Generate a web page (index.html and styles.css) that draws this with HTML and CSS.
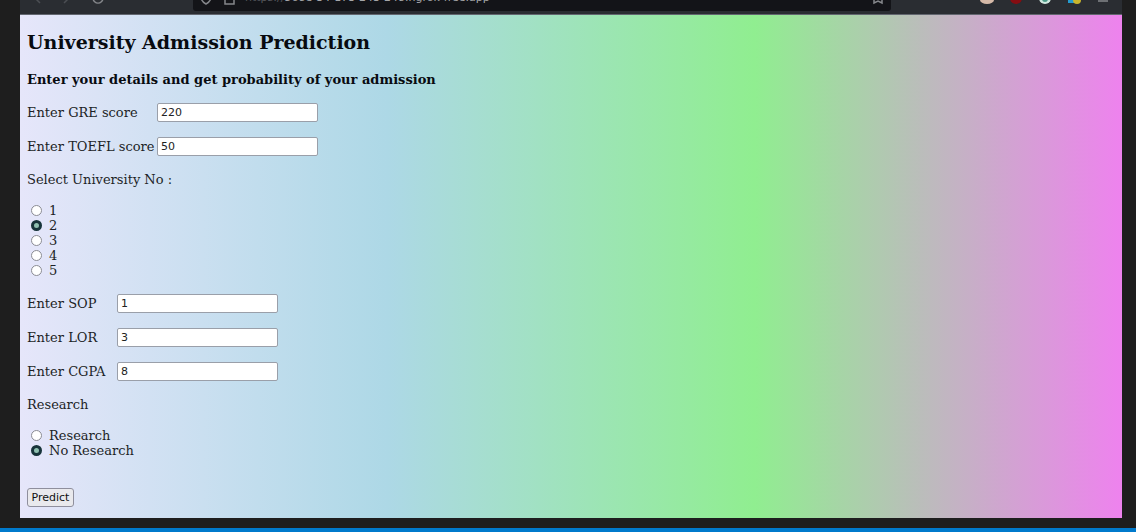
FILE: index.html
```html
<!DOCTYPE html>
<html lang="en">
<head>
<meta charset="utf-8">
<title>University Admission Prediction</title>
<link rel="stylesheet" href="styles.css">
</head>
<body>
<div class="window">
  <header class="toolbar">
    <div class="nav">
      <svg class="icon dim" viewBox="0 0 14 14"><path d="M10 2 5 7l5 5"/></svg>
      <svg class="icon dim" viewBox="0 0 14 14"><path d="M4 2l5 5-5 5"/></svg>
      <svg class="icon" viewBox="0 0 14 14"><path d="M12 4a5 5 0 1 1-8 0"/></svg>
    </div>
    <div class="address">
      <svg class="icon" viewBox="0 0 14 14"><path d="M7 1 12 3v4q-1 4-5 6-4-2-5-6V3z"/></svg>
      <svg class="icon" viewBox="0 0 14 14"><path d="M3 6h9v7H3zM5 6V3h5v3"/></svg>
      <span class="url"><span class="scheme">https://</span>568e-34-173-243-248.ngrok-free.app</span>
      <svg class="icon star" viewBox="0 0 14 14"><path d="M3 5v7l4-2 4 2V5"/></svg>
    </div>
    <div class="extensions">
      <svg class="icon" viewBox="0 0 14 14"><ellipse class="peach" cx="7" cy="9" rx="7" ry="4"/></svg>
      <svg class="icon" viewBox="0 0 14 14"><circle class="red" cx="7" cy="7" r="6"/></svg>
      <svg class="icon" viewBox="0 0 14 14"><circle class="mint" cx="7" cy="7" r="6"/><circle class="teal" cx="7" cy="8" r="3"/></svg>
      <svg class="icon" viewBox="0 0 14 14"><path class="blue" d="M1 2h7v10H1z"/><circle class="yellow" cx="10" cy="9" r="4"/></svg>
      <svg class="icon" viewBox="0 0 14 14"><path d="M2 10h10"/></svg>
    </div>
  </header>
  <main class="page">
    <h2 class="title">University Admission Prediction</h2>
    <h4 class="subtitle">Enter your details and get probability of your admission</h4>
    <form class="form">
      <div class="scores">
        <label for="gre">Enter GRE score</label><input class="text" id="gre" type="text" value="220">
        <label for="toefl">Enter TOEFL score</label><input class="text" id="toefl" type="text" value="50">
      </div>
      <fieldset class="group">
        <legend class="legend">Select University No :</legend>
        <label class="option"><input class="radio" type="radio" name="university">1</label>
        <label class="option"><input class="radio" type="radio" name="university" checked>2</label>
        <label class="option"><input class="radio" type="radio" name="university">3</label>
        <label class="option"><input class="radio" type="radio" name="university">4</label>
        <label class="option"><input class="radio" type="radio" name="university">5</label>
      </fieldset>
      <div class="scores grades">
        <label for="sop">Enter SOP</label><input class="text" id="sop" type="text" value="1">
        <label for="lor">Enter LOR</label><input class="text" id="lor" type="text" value="3">
        <label for="cgpa">Enter CGPA</label><input class="text" id="cgpa" type="text" value="8">
      </div>
      <fieldset class="group">
        <legend class="legend">Research</legend>
        <label class="option"><input class="radio" type="radio" name="research">Research</label>
        <label class="option"><input class="radio" type="radio" name="research" checked>No Research</label>
      </fieldset>
      <button class="predict" type="button">Predict</button>
    </form>
  </main>
</div>
<footer class="statusbar"></footer>
</body>
</html>
```

FILE: styles.css
```css
* { box-sizing: border-box; }
body {
  margin: 0;
  min-height: 100vh;
  display: flex;
  flex-direction: column;
  background: #1e1e1e;
  color: #1c1f26;
  font: 13px/15px "DejaVu Serif", serif;
}
.window {
  flex: 1;
  display: flex;
  flex-direction: column;
  margin: 0 14px 10px 20px;
}
.toolbar {
  display: flex;
  align-items: flex-end;
  height: 15px;
  background: #2a2d32;
  border-bottom: 1px solid #62666f;
  overflow: hidden;
}
.icon {
  flex: none;
  width: 14px;
  height: 14px;
  fill: none;
  stroke: #85878b;
  stroke-width: 1.5;
}
.dim { stroke: #4b4e53; }
.nav {
  display: flex;
  gap: 16px;
  width: 173px;
  padding: 0 0 9px 10px;
}
.address {
  display: flex;
  align-items: flex-end;
  gap: 9px;
  width: 698px;
  height: 24px;
  padding: 0 6px 6px;
  margin-bottom: 3px;
  border-radius: 3px;
  background: #131418;
}
.url {
  color: #a5a6a9;
  font: 11px/14px "DejaVu Sans", sans-serif;
  white-space: nowrap;
}
.scheme { color: #55575c; }
.star { margin-left: auto; }
.extensions {
  display: flex;
  flex: 1;
  justify-content: flex-end;
  gap: 15px;
  padding: 0 12px 9px 0;
}
.extensions circle, .extensions ellipse, .blue { stroke: none; }
.peach { fill: #d5b9a8; }
.red { fill: #850d12; }
.mint { fill: #d0e8df; }
.teal { fill: #4b9b88; }
.blue { fill: #249bd0; }
.yellow { fill: #c9b52c; }
.page {
  flex: 1;
  padding: 16px 7px 11px;
  background: linear-gradient(to right, lavender, lightblue, lightgreen, violet);
}
.title {
  margin: 0 0 19px;
  color: #080b10;
  font-size: 19px;
  line-height: 22px;
}
.subtitle {
  margin: 0 0 16px;
  color: #080b10;
  font-size: 13px;
  line-height: 15px;
}
.scores {
  display: grid;
  grid-template-columns: 127px 161px;
  column-gap: 3px;
  row-gap: 15px;
  align-items: center;
  margin-bottom: 16px;
  white-space: nowrap;
}
.grades { grid-template-columns: 87px 161px; }
.text {
  width: 100%;
  height: 19px;
  padding: 0 3px;
  border: 1px solid #9a9fa9;
  border-radius: 2px;
  background: #fff;
  color: #222;
  font: 11px/15px "DejaVu Sans", sans-serif;
}
.group {
  margin: 0 0 16px;
  padding: 0;
  border: 0;
}
.legend {
  padding: 0;
  margin-bottom: 16px;
}
.option {
  display: flex;
  align-items: center;
  gap: 7px;
  width: max-content;
  padding-left: 4px;
}
.radio {
  appearance: none;
  width: 11px;
  height: 11px;
  margin: 0;
  border: 1px solid #8b8c94;
  border-radius: 50%;
  background: #fff;
}
.radio:checked {
  border: 3px solid #17343a;
  background: #8fc0b0;
}
.predict {
  margin-top: 14px;
  width: 47px;
  height: 19px;
  padding: 0;
  border: 1px solid #8f8f9d;
  border-radius: 3px;
  background: #e9e9ed;
  color: #111;
  font: 11px/15px "DejaVu Sans", sans-serif;
}
.statusbar {
  height: 4px;
  background: #007acc;
}
```
